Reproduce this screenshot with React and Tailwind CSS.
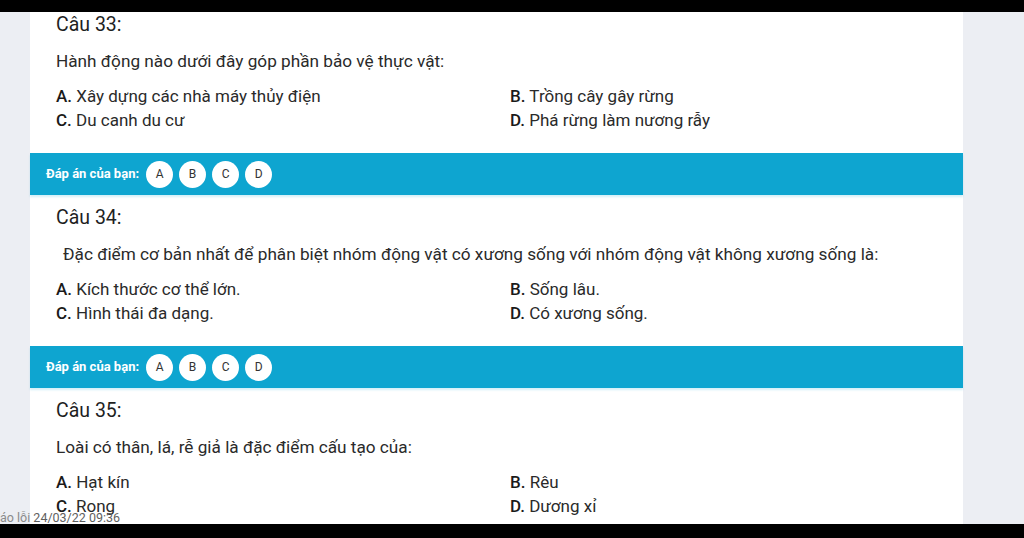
const questions = [
  {
    no: 33,
    text: 'Hành động nào dưới đây góp phần bảo vệ thực vật:',
    indent: false,
    options: [
      ['A', 'Xây dựng các nhà máy thủy điện'],
      ['B', 'Trồng cây gây rừng'],
      ['C', 'Du canh du cư'],
      ['D', 'Phá rừng làm nương rẫy'],
    ],
  },
  {
    no: 34,
    text: 'Đặc điểm cơ bản nhất để phân biệt nhóm động vật có xương sống với nhóm động vật không xương sống là:',
    indent: true,
    options: [
      ['A', 'Kích thước cơ thể lớn.'],
      ['B', 'Sống lâu.'],
      ['C', 'Hình thái đa dạng.'],
      ['D', 'Có xương sống.'],
    ],
  },
  {
    no: 35,
    text: 'Loài có thân, lá, rễ giả là đặc điểm cấu tạo của:',
    indent: false,
    options: [
      ['A', 'Hạt kín'],
      ['B', 'Rêu'],
      ['C', 'Rong'],
      ['D', 'Dương xỉ'],
    ],
  },
]

const AnswerBar = () => (
  <div className="flex h-[42px] items-center bg-[#0ea5d0] pl-4 shadow-[0_2px_2px_rgba(14,165,208,0.18)]">
    <span className="mr-[7px] text-[13px] font-bold text-white">Đáp án của bạn:</span>
    <div className="flex gap-[6px]">
      {['A', 'B', 'C', 'D'].map((l) => (
        <div
          key={l}
          className="flex h-[27px] w-[27px] items-center justify-center rounded-full bg-white text-[12px] text-[#333]"
        >
          {l}
        </div>
      ))}
    </div>
  </div>
)

const Question = ({ q, first }) => (
  <div className={`${first ? 'pt-[1px]' : 'pt-[11px]'} pb-[21px] pl-[26px] pr-6 text-[#2a2a2a]`}>
    <div className="h-6 text-[19.5px] leading-6 text-[#1f1f1f]">Câu {q.no}:</div>
    <div className={`mt-3 h-6 whitespace-nowrap text-[17.2px] leading-6 ${q.indent ? 'pl-[7px]' : ''}`}>{q.text}</div>
    <div className="mt-[11px] grid grid-cols-[454px_1fr] text-[17px] leading-6">
      {q.options.map(([l, t]) => (
        <div key={l} className="h-6 whitespace-nowrap">
          <span className="font-medium text-[#1a1a1a]">{l}.</span> {t}
        </div>
      ))}
    </div>
  </div>
)

export default function App() {
  return (
    <div
      className="flex h-[538px] w-[1024px] flex-col overflow-hidden bg-black"
      style={{ fontFamily: 'Roboto, "Noto Sans", sans-serif' }}
    >
      <div className="h-3 shrink-0 bg-black" />
      <div className="relative flex-1 overflow-hidden bg-[#eceef3]">
        <div className="ml-[30px] h-full w-[933px] bg-white">
          {questions.map((q, i) => (
            <div key={q.no}>
              <Question q={q} first={i === 0} />
              {i < questions.length - 1 && <AnswerBar />}
            </div>
          ))}
        </div>
        <div className="absolute bottom-0 left-0 text-[12.5px] leading-3 text-[#5f5f5f]">
          <span className="text-[#8a8a8a]">áo lỗi</span> 24/03/22 09:36
        </div>
      </div>
      <div className="h-[14px] shrink-0 bg-black" />
    </div>
  )
}
